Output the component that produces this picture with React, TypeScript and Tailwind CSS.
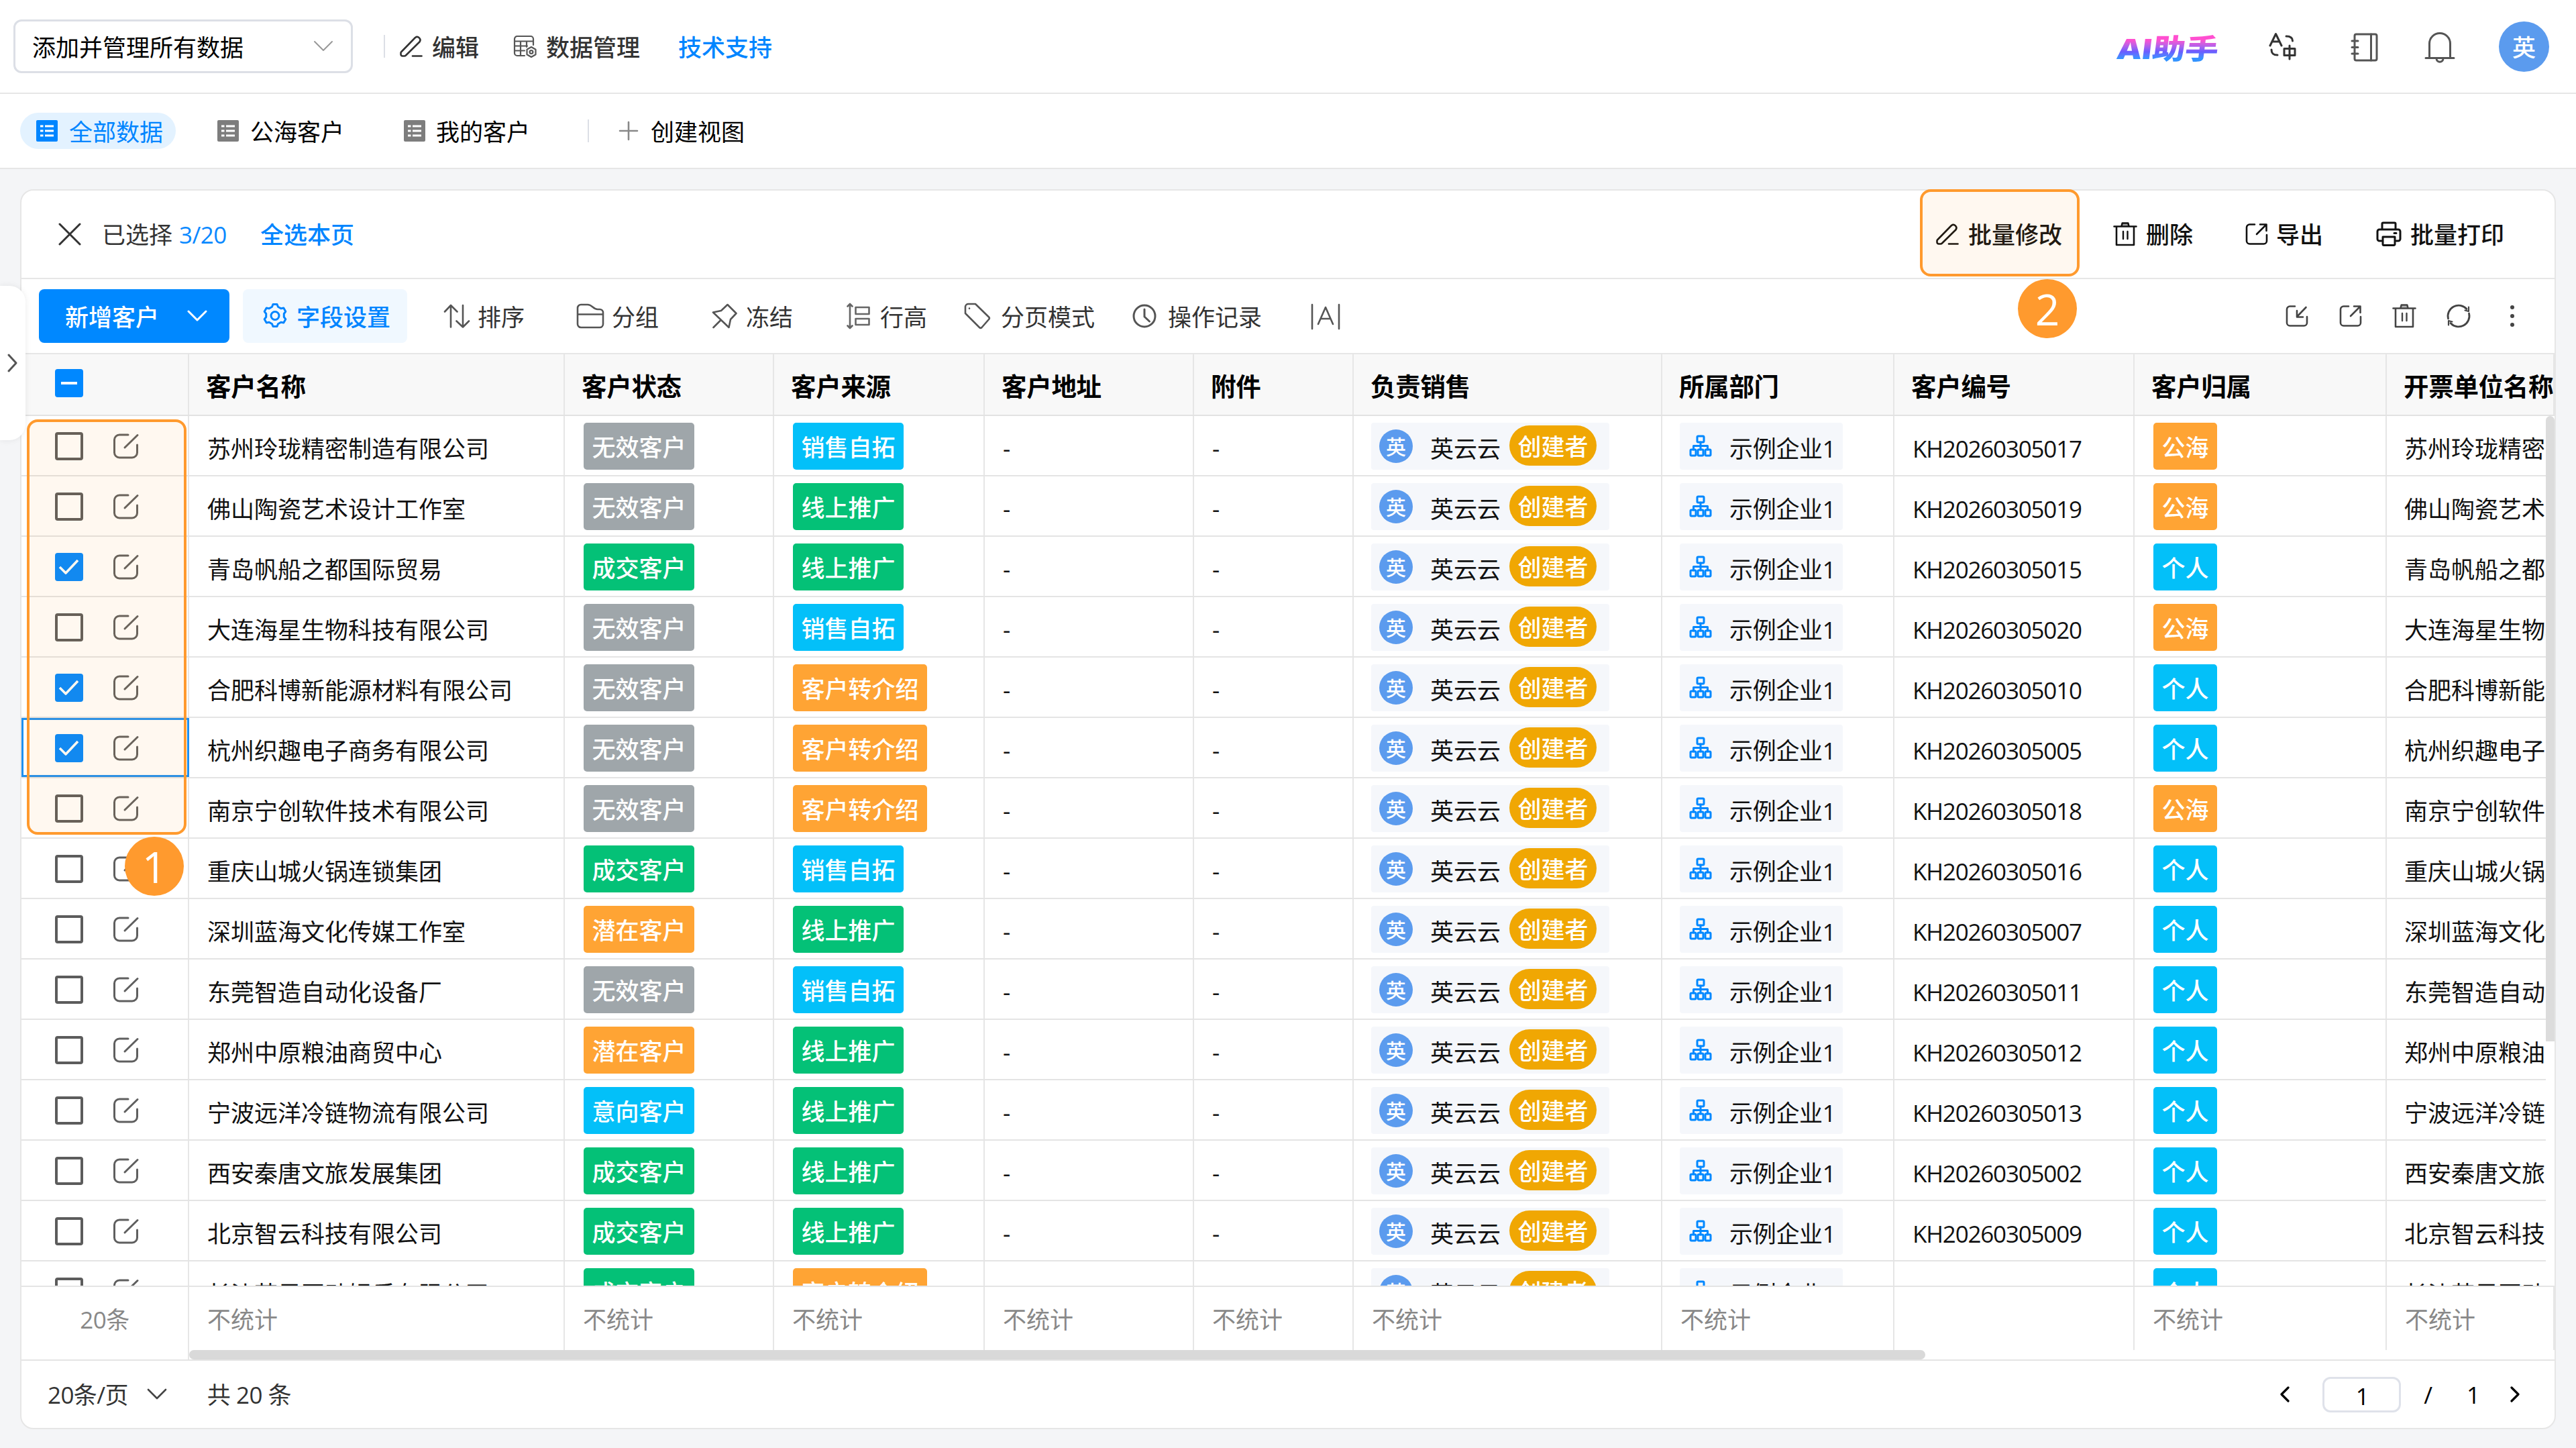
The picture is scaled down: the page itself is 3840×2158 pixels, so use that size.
import React from "react";
import clsx from "clsx";

type TagColor = "gray" | "green" | "orange" | "cyan";

interface Customer {
  name: string;
  status: string;
  source: string;
  code: string;
  owner: string;
  checked?: boolean;
  active?: boolean;
}

const customers: Customer[] = [
  { name: "苏州玲珑精密制造有限公司", status: "无效客户", source: "销售自拓", code: "KH20260305017", owner: "公海" },
  { name: "佛山陶瓷艺术设计工作室", status: "无效客户", source: "线上推广", code: "KH20260305019", owner: "公海" },
  { name: "青岛帆船之都国际贸易", status: "成交客户", source: "线上推广", code: "KH20260305015", owner: "个人", checked: true },
  { name: "大连海星生物科技有限公司", status: "无效客户", source: "销售自拓", code: "KH20260305020", owner: "公海" },
  { name: "合肥科博新能源材料有限公司", status: "无效客户", source: "客户转介绍", code: "KH20260305010", owner: "个人", checked: true },
  { name: "杭州织趣电子商务有限公司", status: "无效客户", source: "客户转介绍", code: "KH20260305005", owner: "个人", checked: true, active: true },
  { name: "南京宁创软件技术有限公司", status: "无效客户", source: "客户转介绍", code: "KH20260305018", owner: "公海" },
  { name: "重庆山城火锅连锁集团", status: "成交客户", source: "销售自拓", code: "KH20260305016", owner: "个人" },
  { name: "深圳蓝海文化传媒工作室", status: "潜在客户", source: "线上推广", code: "KH20260305007", owner: "个人" },
  { name: "东莞智造自动化设备厂", status: "无效客户", source: "销售自拓", code: "KH20260305011", owner: "个人" },
  { name: "郑州中原粮油商贸中心", status: "潜在客户", source: "线上推广", code: "KH20260305012", owner: "个人" },
  { name: "宁波远洋冷链物流有限公司", status: "意向客户", source: "线上推广", code: "KH20260305013", owner: "个人" },
  { name: "西安秦唐文旅发展集团", status: "成交客户", source: "线上推广", code: "KH20260305002", owner: "个人" },
  { name: "北京智云科技有限公司", status: "成交客户", source: "线上推广", code: "KH20260305009", owner: "个人" },
  { name: "长沙芒果互动娱乐有限公司", status: "成交客户", source: "客户转介绍", code: "", owner: "个人" },
];

const tagColors: Record<string, TagColor> = {
  无效客户: "gray",
  成交客户: "green",
  潜在客户: "orange",
  意向客户: "cyan",
  销售自拓: "cyan",
  线上推广: "green",
  客户转介绍: "orange",
  公海: "orange",
  个人: "cyan",
};

const tagClasses: Record<TagColor, string> = {
  gray: "bg-[#9fa6aa]",
  green: "bg-[#04c177]",
  orange: "bg-[#ffa434]",
  cyan: "bg-[#03c0f9]",
};

const columns = [
  { title: "客户名称", width: "w-[560px]", summary: "不统计" },
  { title: "客户状态", width: "w-[312px]", summary: "不统计" },
  { title: "客户来源", width: "w-[314px]", summary: "不统计" },
  { title: "客户地址", width: "w-[312px]", summary: "不统计" },
  { title: "附件", width: "w-[238px]", summary: "不统计" },
  { title: "负责销售", width: "w-[460px]", summary: "不统计" },
  { title: "所属部门", width: "w-[346px]", summary: "不统计" },
  { title: "客户编号", width: "w-[358px]", summary: "" },
  { title: "客户归属", width: "w-[376px]", summary: "不统计" },
  { title: "开票单位名称", width: "w-[250px]", summary: "不统计" },
];

/* ---------- icons ---------- */

interface IconProps {
  w: number;
  h: number;
  sw?: number;
  className?: string;
  children: React.ReactNode;
}

const Icon: React.FC<IconProps> = ({ w, h, sw = 2.6, className, children }) => (
  <svg
    width={w}
    height={h}
    viewBox={`0 0 ${w} ${h}`}
    fill="none"
    stroke="currentColor"
    strokeWidth={sw}
    strokeLinecap="round"
    strokeLinejoin="round"
    className={clsx("shrink-0", className)}
  >
    {children}
  </svg>
);

const PencilIcon = ({ className }: { className?: string }) => (
  <Icon w={34} h={34} className={className}>
    <path d="M2 25.5 23 4a4.6 4.6 0 0 1 6.600 6.200L9 30.500c-.6.6-1.300 1-2.200 1H4a2.500 2.500 0 0 1-2.500-2.500v-2.200c0-.5.2-.9.500-1.300Z" />
    <path d="M19 31.500h13.500" />
  </Icon>
);

const TrashIcon = ({ className }: { className?: string }) => (
  <Icon w={36} h={38} className={className}>
    <path d="M1.500 7.500h33M5 8v27h26V8M12.500 7l1.200-4.500h8.600L23.500 7" />
    <path d="M12.800 6.500 14 3h8l1.200 3.500Z" fill="currentColor" fillOpacity="0.4" stroke="none" />
    <path d="M15 15v11M21.500 15v11" strokeWidth={2.400} />
  </Icon>
);

const ExportIcon = ({ className }: { className?: string }) => (
  <Icon w={34} h={34} className={className}>
    <path d="M14 2.500H6.500a4.500 4.500 0 0 0-4.500 4.500v20A4.500 4.500 0 0 0 6.500 31.500h21a4.500 4.500 0 0 0 4.500-4.500V18" />
    <path d="M17 17 31 3M22 2.500h9.500V12" />
  </Icon>
);

const ImportIcon = ({ className }: { className?: string }) => (
  <Icon w={34} h={34} className={className}>
    <path d="M14 2.500H6.500a4.500 4.500 0 0 0-4.500 4.500v20A4.500 4.500 0 0 0 6.500 31.500h21a4.500 4.500 0 0 0 4.500-4.500V18" />
    <path d="M30.500 4 17 18M17 9v9.500h9" />
  </Icon>
);

const EditIcon = () => (
  <Icon w={40} h={40} sw={3} className="text-[#5f5f5f]">
    <path d="M23 3H10a7.500 7.500 0 0 0-7.500 7.500v19A7.500 7.500 0 0 0 10 37h19a7.500 7.500 0 0 0 7.500-7.500V18" />
    <path d="M18 22 37 3.500" />
  </Icon>
);

const ViewIcon = ({ className }: { className?: string }) => (
  <svg width="32" height="32" viewBox="0 0 32 32" className={clsx("shrink-0", className)}>
    <rect width="32" height="32" rx="2" fill="currentColor" />
    <path d="M6 9h4.500M13 9h13M6 16h4.500M13 16h13M6 23h4.500M13 23h13" stroke="#fff" strokeWidth="3" />
  </svg>
);

const DeptIcon = () => (
  <Icon w={34} h={34} sw={3} className="text-[#0088ff]">
    <rect x="12" y="2" width="10" height="9" rx="1.500" />
    <path d="M17 11v11M6.500 22v-5.500h21V22" />
    <rect x="2" y="22" width="8" height="9" rx="1.500" />
    <rect x="13" y="22" width="8" height="9" rx="1.500" />
    <rect x="24" y="22" width="8" height="9" rx="1.500" />
  </Icon>
);

const ChevronDown = ({ className, sw }: { className?: string; sw?: number }) => (
  <Icon w={30} h={18} sw={sw} className={className}>
    <path d="m2 2 13 13L28 2" />
  </Icon>
);

const GearIcon = () => (
  <Icon w={38} h={40} sw={3}>
    <path d="M14.500 6.200 16 2.500h6l1.500 3.700 4.300 2.500 4-.6 3 5.200-2.500 3.200v5l2.500 3.200-3 5.200-4-.6-4.300 2.500-1.500 3.700h-6l-1.500-3.700-4.300-2.500-4 .6-3-5.200 2.500-3.200v-5l-2.500-3.200 3-5.200 4 .6Z" />
    <circle cx="19" cy="19.500" r="6" />
  </Icon>
);

/* ---------- small pieces ---------- */

const Tag = ({ label }: { label: string }) => (
  <span
    className={clsx(
      "ml-px flex h-[70px] items-center rounded-[5px] px-[12.500px] pt-1 font-medium whitespace-nowrap text-white",
      tagClasses[tagColors[label]]
    )}
  >
    {label}
  </span>
);

const Checkbox = ({ checked }: { checked?: boolean }) =>
  checked ? (
    <span className="flex size-[42px] shrink-0 items-center justify-center rounded-[4px] bg-[#0088ff]">
      <Icon w={34} h={26} sw={3.600} className="text-white">
        <path d="m3 13 9 9L30 3" strokeLinecap="butt" />
      </Icon>
    </span>
  ) : (
    <span className="size-[42px] shrink-0 rounded-[4px] border-4 border-[#5c5c5c] bg-white" />
  );

const Cell: React.FC<{ width: string; className?: string; children?: React.ReactNode }> = ({
  width,
  className,
  children,
}) => (
  <div
    className={clsx(
      "flex shrink-0 items-center overflow-hidden border-r-2 border-[#e6e6e6] whitespace-nowrap",
      width,
      className
    )}
  >
    {children}
  </div>
);

const CustomerRow = ({ row }: { row: Customer }) => (
  <div className="flex h-[90px] shrink-0 border-b-2 border-[#e4e4e4]">
    <div
      className={clsx(
        "flex w-[250px] shrink-0 items-center gap-11 pt-0.5",
        row.active ? "border-[3px] border-[#1e90f0] pl-[47px]" : "border-r-2 border-[#e6e6e6] pl-[50px]"
      )}
    >
      <Checkbox checked={row.checked} />
      <EditIcon />
    </div>
    <Cell width="w-[560px]" className="pt-[10px] pl-[27px]">{row.name}</Cell>
    <Cell width="w-[312px]" className="pt-0.5 pl-[27px]"><Tag label={row.status} /></Cell>
    <Cell width="w-[314px]" className="pt-0.5 pl-[27px]"><Tag label={row.source} /></Cell>
    <Cell width="w-[312px]" className="pt-2 pl-[27px]">-</Cell>
    <Cell width="w-[238px]" className="pt-2 pl-[27px]">-</Cell>
    <Cell width="w-[460px]" className="pt-0.5 pl-[26px]">
      <div className="flex h-[70px] w-[355px] items-center rounded bg-[#f5f7fb] pl-3">
        <span className="flex size-[50px] shrink-0 items-center justify-center rounded-full bg-[#5b9bee] pt-0.5 text-[30px] font-medium text-white">
          英
        </span>
        <span className="ml-[26px] pt-2">英云云</span>
        <span className="mb-0.5 ml-[13px] flex h-[60px] w-[130px] items-center justify-center rounded-full bg-[#f0a703] pt-1 font-medium text-white">
          创建者
        </span>
      </div>
    </Cell>
    <Cell width="w-[346px]" className="pt-0.5 pl-[26px]">
      <div className="flex h-[70px] w-[243px] items-center rounded bg-[#f5f7fb] pl-[14px]">
        <DeptIcon />
        <span className="ml-[26px] pt-[7px] tracking-[-0.3px]">示例企业1</span>
      </div>
    </Cell>
    <Cell width="w-[358px]" className="pt-[10px] pl-[27px] tracking-[-1.2px]">{row.code}</Cell>
    <Cell width="w-[376px]" className="pt-0.5 pl-[27px]"><Tag label={row.owner} /></Cell>
    <Cell width="w-[250px]" className="border-r-0 pt-[10px] pl-[26px]">{row.name}</Cell>
  </div>
);

const TopBar = () => (
  <header className="flex h-[140px] items-center border-b-2 border-[#e6e6e6] bg-white pl-5">
    <div className="flex h-20 w-[506px] items-center justify-between rounded-xl border-[3px] border-[#dcdfe6] pr-[26px] pl-[25px] text-black">
      <span className="pt-[3px]">添加并管理所有数据</span>
      <ChevronDown className="text-[#999]" sw={2} />
    </div>
    <span className="ml-[46px] h-[34px] w-0.5 bg-[#dcdfe6]" />
    <PencilIcon className="ml-[22px]" />
    <span className="ml-[14px] pt-[3px] font-medium">编辑</span>
    <Icon w={36} h={34} sw={2.200} className="ml-[51px] text-[#555]">
      <path d="M17 31H6a4 4 0 0 1-4-4V6a4 4 0 0 1 4-4h20a4 4 0 0 1 4 4v9M2 9.500h28M2 16.500h19M2 23.500h15M11 9.500V31M20 9.500V18" />
      <path d="m27 18 6.500 3.700v7.600L27 33l-6.500-3.700v-7.600Z" />
      <circle cx="27" cy="25.500" r="2.400" />
    </Icon>
    <span className="ml-[13px] pt-[3px] font-medium">数据管理</span>
    <span className="ml-[57px] pt-[3px] font-medium text-[#0085ff]">技术支持</span>

    <span className="mt-1.5 ml-auto origin-right scale-x-[1.18] -skew-x-[6deg] bg-gradient-to-b from-[#ff4fd0] from-25% via-[#6a5cff] via-60% to-[#3393ff] to-80% bg-clip-text pr-0.5 text-[42px] font-black tracking-[-0.5px] text-transparent">
      AI助手
    </span>
    <Icon w={42} h={42} sw={3} className="ml-[73px] text-[#333]">
      <path d="M2 20 10.500 2.500 19 20M5.500 14h10" />
      <path d="M26 6c6 0 9.500 2 9.500 7M4 26c0 5.500 2.500 8 9 8" />
      <path d="M23 24.500h16v10H23ZM31 20v20" />
    </Icon>
    <Icon w={42} h={44} sw={3} className="mt-1 ml-[80px] text-[#555]">
      <rect x="6" y="2" width="33" height="39" rx="2.500" />
      <path d="M30.500 2v39M2 12h9M2 21.500h9M2 31h9" />
    </Icon>
    <Icon w={46} h={48} sw={3} className="mt-1 ml-[68px] text-[#555]">
      <path d="M2 39.500h42M7.500 39V18a15.500 15.500 0 0 1 31 0v21M18 40c0 7 10 7 10 0" />
    </Icon>
    <span className="mr-10 ml-[65px] flex size-[75px] items-center justify-center rounded-full bg-[#5b9bee] pt-1 font-medium text-white">
      英
    </span>
  </header>
);

const ViewTabs = () => (
  <nav className="flex h-28 items-center border-b-2 border-[#e6e6e6] bg-white pl-[30px] text-black">
    <div className="flex h-[54px] w-[232px] items-center rounded-full bg-[#e3f2ff] pl-6 text-[#0085ff]">
      <ViewIcon />
      <span className="ml-[17px] pt-1">全部数据</span>
    </div>
    <ViewIcon className="ml-[62px] text-[#7d7d7d]" />
    <span className="ml-[17px] pt-1">公海客户</span>
    <ViewIcon className="ml-[89px] text-[#7d7d7d]" />
    <span className="ml-[16px] pt-1">我的客户</span>
    <span className="ml-[86px] h-[34px] w-0.5 bg-[#dcdfe6]" />
    <Icon w={30} h={30} className="ml-[44px] text-[#888]">
      <path d="M2 15h26M15 2v26" />
    </Icon>
    <span className="ml-[18px] pt-1">创建视图</span>
  </nav>
);

const SelectionBar = () => (
  <div className="flex h-[132px] items-center border-b-2 border-[#e6e6e6] pl-[55px]">
    <Icon w={34} h={34} sw={3} className="text-[#333]">
      <path d="m2 2 30 30M32 2 2 32" />
    </Icon>
    <span className="ml-[31px] pt-0.5">已选择</span>
    <span className="ml-[10px] pt-0.5 tracking-[-0.5px] text-[#0a89ff]">3/20</span>
    <span className="ml-[50px] pt-0.5 font-medium text-[#0085ff]">全选本页</span>

    <div className="ml-auto flex items-center pr-[75px] font-medium text-[#111]">
      <PencilIcon />
      <span className="ml-[14px] pt-0.5">批量修改</span>
      <TrashIcon className="ml-[76px]" />
      <span className="ml-[13px] pt-0.5">删除</span>
      <ExportIcon className="ml-[78px]" />
      <span className="ml-[12px] pt-0.5">导出</span>
      <Icon w={38} h={38} sw={3} className="ml-[79px]">
        <path d="M9 12V3.500A1.500 1.500 0 0 1 10.500 2h17A1.500 1.500 0 0 1 29 3.500V12M8 29H5a3 3 0 0 1-3-3V15a3 3 0 0 1 3-3h28a3 3 0 0 1 3 3v11a3 3 0 0 1-3 3h-3" />
        <path d="M10 23h18v11a1.500 1.500 0 0 1-1.500 1.500h-15A1.500 1.500 0 0 1 10 34ZM27 17.500h3" />
      </Icon>
      <span className="ml-[13px] pt-0.5">批量打印</span>
    </div>
  </div>
);

const Toolbar = () => (
  <div className="flex h-28 items-center border-b-2 border-[#e6e6e6] pl-[26px]">
    <div className="flex h-20 w-[284px] items-center rounded-lg bg-[#0088ff] pl-[39px] font-medium text-white">
      <span className="pt-1">新增客户</span>
      <ChevronDown className="ml-[42px]" sw={3} />
    </div>
    <div className="ml-5 flex h-20 w-[245px] items-center rounded-lg bg-[#f0f8ff] pl-[29px] font-medium text-[#0085ff]">
      <GearIcon />
      <span className="ml-[13px] pt-1">字段设置</span>
    </div>
    <Icon w={40} h={36} className="ml-[54px] text-[#555]">
      <path d="M11 34.500V2M2 11.500 11 2l9.500 9.500M29 2v32.500M19.500 25.500 29 34.500l9-9" />
    </Icon>
    <span className="ml-[11px] pt-1">排序</span>
    <Icon w={42} h={38} className="ml-[77px] text-[#555]">
      <path d="M2 7a5 5 0 0 1 5-5h10c7 0 8 7 15 7h3a5 5 0 0 1 5 5v17a5 5 0 0 1-5 5H7a5 5 0 0 1-5-5ZM2 16.500h38" />
    </Icon>
    <span className="ml-[11px] pt-1">分组</span>
    <Icon w={38} h={38} className="ml-[79px] text-[#555]">
      <path d="M23.500 2 36.500 15l-8.500 9-2.500 12L2 13.500l12-2.500ZM13.500 25 2.500 36" />
    </Icon>
    <span className="ml-[13px] pt-1">冻结</span>
    <Icon w={36} h={40} className="ml-[80px] text-[#666]">
      <path d="M5 3v34M1.500 5.500 5 2l3.500 3.500M1.500 34.500 5 38l3.500-3.500" />
      <path d="M13.500 7h20v10h-20ZM13.500 24h20v9h-20Z" />
    </Icon>
    <span className="ml-[14px] pt-1">行高</span>
    <Icon w={40} h={40} className="ml-[55px] text-[#555]">
      <path d="M2 6a4.500 4.500 0 0 1 4.500-4H17l20 19.500a2.500 2.500 0 0 1 0 3.500L26.500 37a2.500 2.500 0 0 1-3.500 0L2 16ZM8 8.500v.2" />
    </Icon>
    <span className="ml-[15px] pt-1">分页模式</span>
    <Icon w={36} h={36} sw={3} className="ml-[56px] text-[#555]">
      <circle cx="18" cy="18" r="16" />
      <path d="M18 8v11l7.500 7" />
    </Icon>
    <span className="ml-[17px] pt-1">操作记录</span>
    <Icon w={44} h={40} className="mt-0.5 ml-[73px] text-[#555]">
      <path d="M2 2v36M42 2v36M11 31 22 6l11 25M15 23h14" />
    </Icon>

    <div className="ml-auto flex items-center pr-[59px] text-[#444]">
      <ImportIcon />
      <ExportIcon className="ml-[46px]" />
      <TrashIcon className="ml-[45px]" />
      <Icon w={38} h={38} sw={2.800} className="ml-[44px]">
        <path d="M3.500 23A16 16 0 0 1 31 8.500M34.500 15A16 16 0 0 1 7 29.500" />
        <path d="M34 5.500V12l-5.500-1.500M4 32.500V26l5.500 1.500" strokeWidth={2.200} />
      </Icon>
      <svg width="8" height="34" viewBox="0 0 8 34" fill="currentColor" className="ml-[57px]">
        <circle cx="4" cy="4" r="3" />
        <circle cx="4" cy="17" r="3" />
        <circle cx="4" cy="30" r="3" />
      </svg>
    </div>
  </div>
);

const TableHead = () => (
  <div className="flex h-[92px] shrink-0 overflow-hidden border-b-2 border-[#e2e2e2] bg-[#f8f8f8] text-[37.5px] font-bold text-black">
    <div className="flex w-[250px] shrink-0 items-center border-r-2 border-[#e6e6e6] pl-[50px]">
      <span className="mb-1 flex size-[42px] items-center justify-center rounded-[4px] bg-[#0088ff]">
        <span className="h-1 w-6 bg-white" />
      </span>
    </div>
    {columns.map((col, i) => (
      <Cell
        key={col.title}
        width={col.width}
        className={clsx("pt-1 pl-[25px] tracking-[-0.3px]", i === columns.length - 1 && "border-r-0")}
      >
        {col.title}
      </Cell>
    ))}
  </div>
);

const Summary = () => (
  <div className="flex h-24 shrink-0 overflow-hidden border-t-2 border-[#e4e4e4] text-[#888]">
    <div className="flex w-[250px] shrink-0 items-center justify-center border-r-2 border-[#e6e6e6] pt-1 tracking-[-0.5px]">20条</div>
    {columns.map((col, i) => (
      <Cell key={col.title} width={col.width} className={clsx("pt-1 pl-[27px]", i === columns.length - 1 && "border-r-0")}>
        {col.summary}
      </Cell>
    ))}
  </div>
);

const Pager = () => (
  <div className="flex h-[100px] items-center pl-[39px]">
    <span className="pt-0.5 tracking-[-0.6px]">20条/页</span>
    <ChevronDown className="ml-[28px] text-[#444]" />
    <span className="ml-[60px] pt-0.5 tracking-[-0.5px]">共 20 条</span>
    <div className="ml-auto flex items-center pr-[52px] text-black">
      <Icon w={14} h={24} sw={3.200}>
        <path d="M12 2 2 12l10 10" />
      </Icon>
      <span className="ml-[49px] flex h-[53px] w-[117px] items-center justify-center rounded-xl border-[3px] border-[#dfe2ea] pt-1.5 pl-0.5">1</span>
      <span className="ml-[34px] pt-0.5">/</span>
      <span className="ml-[51px] pt-0.5">1</span>
      <Icon w={14} h={24} sw={3.200} className="ml-[45px]">
        <path d="m2 2 10 10L2 22" />
      </Icon>
    </div>
  </div>
);

const StepBadge = ({ n, className }: { n: number; className: string }) => (
  <span
    className={clsx(
      "absolute z-20 flex size-[88px] items-center justify-center rounded-full bg-[#ff9a2e] pt-0.5 text-[64px] text-white",
      className
    )}
  >
    {n}
  </span>
);

export default function App() {
  return (
    <div className="relative flex h-[2158px] w-[3840px] flex-col overflow-hidden bg-[#f4f5f7] font-['Open_Sans','Noto_Sans_CJK_SC',sans-serif] text-[35px] leading-[1.2] text-[#333]">
      <TopBar />
      <ViewTabs />

      <main className="mx-[30px] mt-[30px] flex h-[1848px] flex-col overflow-hidden rounded-[20px] border-2 border-[#e6e6e6] bg-white">
        <SelectionBar />
        <Toolbar />
        <TableHead />
        <div className="flex h-[1296px] shrink-0 text-[#111]">
          <div className="flex w-[3763px] flex-col overflow-hidden">
            {customers.map((row) => (
              <CustomerRow key={row.name} row={row} />
            ))}
          </div>
          <div className="h-[932px] flex-1 rounded-t-[7px] bg-[#dcdcdc]" />
        </div>
        <Summary />
        <div className="flex h-4 shrink-0 border-b-2 border-[#e4e4e4]">
          <div className="w-[250px] border-r-2 border-[#e6e6e6]" />
          <div className="w-[2588px] rounded-[7px] bg-[#d9d9d9]" />
        </div>
        <Pager />
      </main>

      {/* sidebar handle */}
      <div className="absolute top-[426px] left-0 flex h-[230px] w-[38px] items-center rounded-r-[24px] bg-white pl-[11px] shadow-[0_0_10px_rgba(0,0,0,0.08)]">
        <Icon w={16} h={28} sw={3} className="text-[#555]">
          <path d="m2 2 11 12L2 26" />
        </Icon>
      </div>

      {/* guide marks */}
      <div className="absolute top-[625px] left-[40px] z-10 h-[619px] w-[238px] rounded-2xl border-4 border-[#ff9a2e] bg-[#ff9a2e]/7" />
      <StepBadge n={1} className="top-[1247px] left-[186px]" />
      <div className="absolute top-[282px] left-[2862px] z-10 h-[130px] w-[238px] rounded-2xl border-4 border-[#ff9a2e] bg-[#ff9a2e]/7" />
      <StepBadge n={2} className="top-[416px] left-[3008px]" />
    </div>
  );
}
